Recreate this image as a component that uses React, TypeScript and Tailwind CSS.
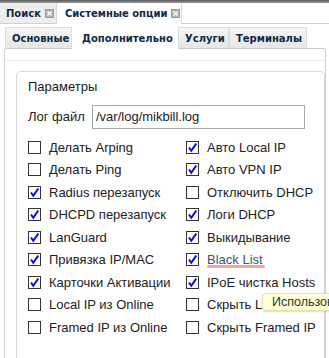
import React from 'react';

const leftItems: [string, boolean][] = [
    ['Делать Arping', false],
    ['Делать Ping', false],
    ['Radius перезапуск', true],
    ['DHCPD перезапуск', true],
    ['LanGuard', true],
    ['Привязка IP/MAC', true],
    ['Карточки Активации', true],
    ['Local IP из Online', false],
    ['Framed IP из Online', false],
];

const rightItems: [string, boolean][] = [
    ['Авто Local IP', true],
    ['Авто VPN IP', true],
    ['Отключить DHCP', false],
    ['Логи DHCP', true],
    ['Выкидывание', true],
    ['Black List', true],
    ['IPoE чистка Hosts', true],
    ['Скрыть Local IP', false],
    ['Скрыть Framed IP', false],
];

const CloseIcon = () => (
    <span className="inline-flex items-center justify-center w-[9px] h-[9px] bg-[#b4b4b4] border border-[#9a9a9a] ml-[4px] shrink-0">
        <svg width="7" height="7" viewBox="0 0 7 7">
            <path d="M1.5 1.5 L5.5 5.5 M5.5 1.5 L1.5 5.5" stroke="#ffffff" strokeWidth="1.3" />
        </svg>
    </span>
);

const CheckBox = ({ checked }: { checked: boolean }) => (
    <span className="w-[13px] h-[13px] shrink-0 border border-[#333] bg-white flex items-center justify-center">
        {checked && (
            <svg width="11" height="11" viewBox="0 0 11 11">
                <path d="M2 5.5 L4.3 8.8 L9.3 1.5" stroke="#0a0ae6" strokeWidth="2" fill="none" />
            </svg>
        )}
    </span>
);

const Row = ({ label, checked }: { label: string; checked: boolean }) => {
    const black = label === 'Black List';
    return (
        <div className="h-[22.5px] flex items-center gap-[8px]">
            <CheckBox checked={checked} />
            {black ? (
                <span className="relative text-[#48506a]">
                    {label}
                    <span className="absolute left-0 right-[-2px] top-[15px] h-[3px] rounded-full bg-[#f8a0a0] blur-[0.6px]" />
                </span>
            ) : (
                <span className="whitespace-nowrap">{label}</span>
            )}
        </div>
    );
};

export default function App() {
    return (
        <div className="w-[329px] h-[358px] overflow-hidden bg-white relative font-['Liberation_Sans',Arial,sans-serif] text-[13px] text-[#222]">
            {/* window top edge */}
            <div className="h-[3px] bg-gradient-to-b from-[#5a5a5a] to-[#9c9c9c]" />

            {/* outer tabs */}
            <div className="flex h-[21px] border-b border-[#d0d0d0] font-['DejaVu_Sans',Verdana,sans-serif] font-bold text-[10px] text-[#0b2a45] whitespace-nowrap">
                <div className="w-[57px] flex items-center pl-[6px] bg-[#eeeeee] border-r border-[#d8d8d8]">
                    Поиск
                    <CloseIcon />
                </div>
                <div className="w-[125px] flex items-center pl-[8px] bg-white border-r border-[#d8d8d8] -mb-px">
                    Системные опции
                    <CloseIcon />
                </div>
            </div>

            {/* inner tabs */}
            <div className="flex mt-[3px] ml-[5px] mr-[4px] h-[22px] border-b border-[#c8c8c8] font-['DejaVu_Sans',Verdana,sans-serif] font-bold text-[10px] text-[#0b2a45] whitespace-nowrap">
                <div className="w-[67px] flex items-center pl-[6px] bg-gradient-to-b from-[#f6f6f6] to-[#e6e6e6] border border-b-0 border-[#dcdcdc]">Основные</div>
                <div className="w-[106px] flex items-center pl-[10px] bg-white -mb-px">Дополнительно</div>
                <div className="w-[51px] flex items-center pl-[6px] bg-gradient-to-b from-[#f6f6f6] to-[#e6e6e6] border border-b-0 border-[#dcdcdc]">Услуги</div>
                <div className="w-[78px] flex items-center pl-[6px] bg-gradient-to-b from-[#f6f6f6] to-[#e6e6e6] border border-b-0 border-[#dcdcdc]">Терминалы</div>
            </div>

            {/* panel */}
            <div className="ml-[4px] mr-[3px] border-l border-r border-[#cfcfcf] h-[320px]">
                <div className="h-[12px] border-b border-[#ececec]" />
                <div className="ml-[11px] mt-[10px] border border-[#d6d6d6] rounded-[5px] h-[300px] pl-[11px] pt-[7px]">
                    <div className="text-[13px] leading-[16px] text-[#1a1a1a]">Параметры</div>
                    <div className="flex items-center mt-[10px] h-[24px]">
                        <span className="w-[64px]">Лог файл</span>
                        <div className="w-[213px] h-[24px] border border-[#a8a8a8] flex items-center pl-[3px]">/var/log/mikbill.log</div>
                    </div>
                    <div className="grid grid-cols-[158px_1fr] mt-[7px]">
                        <div>
                            {leftItems.map(([l, c]) => <Row key={l} label={l} checked={c} />)}
                        </div>
                        <div>
                            {rightItems.map(([l, c]) => <Row key={l} label={l} checked={c} />)}
                        </div>
                    </div>
                </div>
            </div>

            {/* tooltip */}
            <div className="absolute left-[262px] top-[293px] w-[80px] h-[18px] overflow-hidden bg-[#ffffd8] border border-[#e2e2b0] rounded-l-[4px] shadow-[0_1px_2px_rgba(0,0,0,0.15)] pl-[9px] flex items-center text-[12.5px] text-[#333] whitespace-nowrap">
                Использова
            </div>
        </div>
    );
}
